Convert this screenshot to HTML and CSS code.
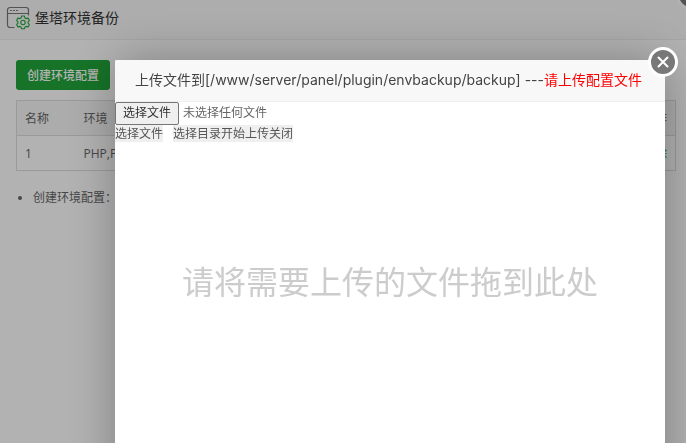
FILE: index.html
```html
<!DOCTYPE html>
<html lang="zh-CN">
<head>
  <meta charset="UTF-8">
  <meta name="viewport" content="width=device-width, initial-scale=1.0">
  <title>堡塔环境备份</title>
  <link rel="stylesheet" href="styles.css">
</head>
<body>
<div class="window">
  <header class="window-title">
    <svg class="logo" width="24" height="24" viewBox="0 0 24 24" fill="none" stroke-linecap="round">
      <path d="M8 21.500H4a2.500 2.500 0 0 1-2.500-2.500V4A2.500 2.500 0 0 1 4 1.500h16A2.500 2.500 0 0 1 22.500 4v5M1.500 7.500h21" stroke="#777" stroke-width="1.200"/>
      <path d="M4.500 4.500h1M7.500 4.500h1M10.500 4.500h1" stroke="#777" stroke-width="1.200"/>
      <g stroke="#20a53a" stroke-width="1.100" stroke-linejoin="round">
        <path d="M15.600 10h2.800l.5 1.900 1.300.700 1.900-.5 1.300 2.300-1.300 1.400v1.400l1.300 1.400-1.300 2.300-1.900-.5-1.300.700-.5 1.700h-2.800l-.5-1.700-1.300-.700-1.900.5-1.300-2.300 1.300-1.400v-1.400l-1.300-1.400 1.300-2.300 1.900.5 1.300-.700z"/>
        <circle cx="17" cy="16.500" r="2.200"/>
      </g>
    </svg>
    <span>堡塔环境备份</span>
  </header>
  <main class="window-body">
    <button class="btn-create" type="button">创建环境配置</button>
    <table class="backup-table">
      <thead>
        <tr><th class="col-name">名称</th><th>环境</th><th class="col-action">操作</th></tr>
      </thead>
      <tbody>
        <tr><td>1</td><td>PHP,Pure-FTPd</td><td class="col-action"><a href="#">删除</a></td></tr>
      </tbody>
    </table>
    <ul class="help">
      <li>创建环境配置：备份当前环境</li>
    </ul>
  </main>
</div>

<button class="close window-close" type="button" aria-label="关闭窗口"></button>

<div class="overlay">
  <section class="dialog">
    <h2 class="dialog-title">上传文件到[/www/server/panel/plugin/envbackup/backup] ---<span class="notice">请上传配置文件</span></h2>
    <button class="close dialog-close" type="button" aria-label="关闭">
      <svg width="24" height="24" viewBox="0 0 24 24" stroke="#fff" stroke-width="2" stroke-linecap="round">
        <path d="M7.500 7.500l9 9M16.500 7.500l-9 9"/>
      </svg>
    </button>
    <div class="file-row">
      <input class="file-input" type="file" id="file">
      <label class="file-button" for="file">选择文件</label>
      <label class="file-name" for="file">未选择任何文件</label>
    </div>
    <div class="actions">
      <button class="action" type="button">选择文件</button>
      <div class="action-group">
        <button class="action" type="button">选择目录</button><button class="action" type="button">开始上传</button><button class="action" type="button">关闭</button>
      </div>
    </div>
    <div class="drop-area">请将需要上传的文件拖到此处</div>
  </section>
</div>
</body>
</html>
```
FILE: styles.css
```css
* {
  box-sizing: border-box;
}

body {
  margin: 0;
  height: 100vh;
  overflow: hidden;
  font-family: "Open Sans", "Noto Sans CJK SC", sans-serif;
  font-size: 12px;
  color: #666;
  background: #fff;
}

button {
  font-family: inherit;
  font-size: 12px;
  border: 0;
  padding: 0;
  cursor: pointer;
}

/* plugin window */
.window-title {
  display: flex;
  align-items: center;
  gap: 5px;
  height: 40px;
  padding: 0 6px 4px;
  font-size: 14px;
  line-height: 20px;
  color: #333;
  background: #f8f8f8;
  border-bottom: 1px solid #eee;
}

.window-body {
  padding: 20px 10px 0 16px;
}

.btn-create {
  display: block;
  height: 30px;
  padding: 0 11px 1px;
  font-weight: 500;
  color: #fff;
  background: #20a53a;
  border-radius: 3px;
}

.backup-table {
  width: 100%;
  margin-top: 10px;
  border: 1px solid #ddd;
  border-collapse: collapse;
  table-layout: fixed;
}

.backup-table th,
.backup-table td {
  height: 35px;
  padding: 2px 8px 0;
  font-weight: 400;
  line-height: 18px;
  text-align: left;
  border-bottom: 1px solid #ddd;
}

.backup-table th {
  background: #f6f6f6;
}

.backup-table .col-name {
  width: 59px;
}

.backup-table .col-action {
  text-align: right;
}

.backup-table a {
  color: #20a53a;
  text-decoration: none;
}

.help {
  margin: 18px 0 0;
  padding-left: 17px;
  line-height: 18px;
}

/* upload dialog */
.overlay {
  position: fixed;
  inset: 0;
  padding: 60px 21px 0 115px;
  background: rgba(0, 0, 0, 0.3);
}

.dialog {
  position: relative;
  height: 100vh;
  background: #fff;
  border-radius: 2px;
  box-shadow: 1px 1px 50px rgba(0, 0, 0, 0.3);
}

.dialog-title {
  margin: 0;
  height: 42px;
  padding: 0 0 0 20px;
  font-family: Inter, "Noto Sans CJK SC", sans-serif;
  font-size: 14px;
  font-weight: 400;
  line-height: 40px;
  white-space: nowrap;
  color: #444;
  background: #f8f8f8;
  border-bottom: 1px solid #eee;
  border-radius: 2px 2px 0 0;
}

.notice {
  color: red;
}

.close {
  position: absolute;
  width: 30px;
  height: 30px;
  display: flex;
  align-items: center;
  justify-content: center;
  background: #787878;
  border: 3px solid #fff;
  border-radius: 50%;
}

.window-close {
  top: -20px;
  right: -20px;
}

.dialog-close {
  top: -13px;
  right: -13px;
}

.file-row {
  display: flex;
  align-items: center;
  gap: 4px;
  height: 23px;
  line-height: 20px;
}

.file-input {
  position: absolute;
  width: 1px;
  height: 1px;
  opacity: 0;
}

.file-button {
  height: 23px;
  padding: 0 7px;
  color: #333;
  background: #efefef;
  border: 1px solid #767676;
  border-radius: 2px;
}

.file-name {
  height: 23px;
  padding-top: 1px;
}

.actions {
  display: flex;
  gap: 10px;
}

.action-group {
  display: flex;
}

.action {
  height: 17px;
  line-height: 17px;
  color: #555;
  background: #efefef;
}

.drop-area {
  margin-top: 116px;
  font-size: 32px;
  line-height: 48px;
  text-align: center;
  color: #ccc;
}
```
